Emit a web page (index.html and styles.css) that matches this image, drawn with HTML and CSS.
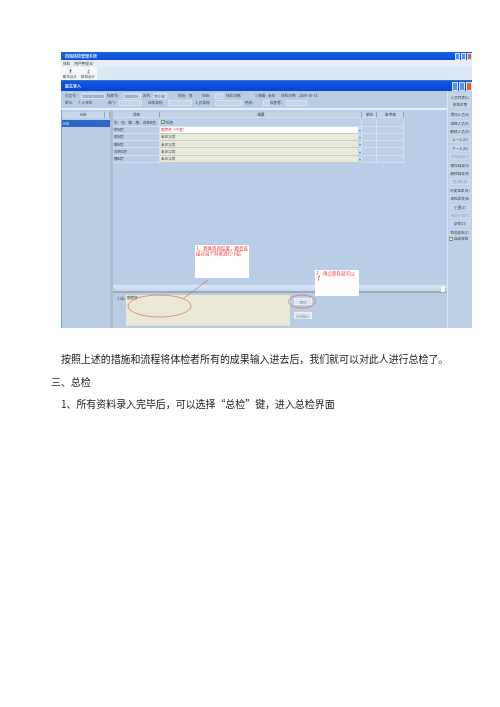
FILE: index.html
```html
<!DOCTYPE html>
<html lang="zh">
<head>
<meta charset="utf-8">
<title>总检</title>
<link rel="stylesheet" href="styles.css">
</head>
<body>
<main class="page">
  <figure class="shot">
    <div class="app">
      <div class="title">
        <span class="title-text">四海体检管理系统</span>
        <span class="controls"><i class="btn-min"></i><i class="btn-max"></i><i class="btn-close"></i></span>
      </div>
      <div class="menu"><span>体检</span><span>用户管理(U)</span></div>
      <div class="tools">
        <div class="tool">
          <svg viewBox="0 0 10 6" class="tool-icon"><path d="M5 0.5v3M3.500 2 5 .5 6.500 2M4 5h2" stroke="#333" fill="none"/></svg>
          <span>医生设计</span>
        </div>
        <div class="tool">
          <svg viewBox="0 0 10 6" class="tool-icon"><path d="M6 0.5 4.500 3.500M3.500 5h3" stroke="#333" fill="none"/></svg>
          <span>群检设计</span>
        </div>
      </div>
      <div class="subtitle">
        <span class="title-text">医生录入</span>
        <span class="controls big"><i class="btn-min"></i><i class="btn-max"></i><i class="btn-close"></i></span>
      </div>
      <div class="body">
        <div class="main">
          <div class="info">
            <div class="info-row">
              <span class="w16">会员号:</span><span class="field w24">10010180004</span>
              <span class="w16 m2">档案号:</span><span class="field w18">1000025</span>
              <span class="w10 m2">姓名:</span><span class="field w14">李小宝</span>
              <span class="w11 m11">性别:</span><span class="w13">男</span>
              <span class="w13">年龄:</span><span class="field w8"></span>
              <span class="w22 m3">体检次数:</span><span class="w10 end">1</span>
              <span class="w10">婚姻:</span><span class="w13">未知</span>
              <span class="w18">体检日期:</span><span class="w20">2009-10-14</span>
            </div>
            <div class="info-row">
              <span class="w13">单位:</span><span class="w30">个人体检</span>
              <span class="w11">部门:</span><span class="field w23"></span>
              <span class="w20 m6">体检类别:</span><span class="field w24"></span>
              <span class="w20 m3">人员类别:</span><span class="field w27"></span>
              <span class="w18 m3">民族:</span><span class="field w7"></span>
              <span class="w16">检查者:</span><span class="field w21"></span>
            </div>
          </div>
          <div class="work">
            <div class="groups">
              <div class="groups-head"><span>年龄</span><span></span></div>
              <div class="groups-row"><span>A组</span><span></span></div>
            </div>
            <div class="results">
              <div class="table">
                <div class="cell head">项目</div><div class="cell head">结果</div><div class="cell head">单位</div><div class="cell head">参考值</div>
                <div class="cell name">肝、胆、脾、胰、双肾B超</div><div class="cell check"><b class="box">✓</b> 检查</div><div class="cell"></div><div class="cell"></div>
                <div class="cell name">肝B超</div><div class="cell value white"><span class="red">脂肪肝（中度）</span><em>▾</em></div><div class="cell"></div><div class="cell"></div>
                <div class="cell name">胆B超</div><div class="cell value">未见异常<em>▾</em></div><div class="cell"></div><div class="cell"></div>
                <div class="cell name">脾B超</div><div class="cell value">未见异常<em>▾</em></div><div class="cell"></div><div class="cell"></div>
                <div class="cell name">双肾B超</div><div class="cell value">未见异常<em>▾</em></div><div class="cell"></div><div class="cell"></div>
                <div class="cell name">胰B超</div><div class="cell value">未见异常<em>▾</em></div><div class="cell"></div><div class="cell"></div>
              </div>
              <div class="scrollbar"><span>‹</span><i></i><span>›</span></div>
              <div class="summary">
                <span class="summary-label">小结:</span>
                <div class="summary-text">脂肪肝</div>
                <div class="summary-actions">
                  <span class="action">保存</span>
                  <span class="action">分析输入</span>
                </div>
              </div>
            </div>
          </div>
        </div>
        <aside class="side">
          <span class="side-btn">人员列表(L)</span>
          <span class="side-btn tight">体检日期</span>
          <span class="side-btn">增加人员(A)</span>
          <span class="side-btn">编辑人员(E)</span>
          <span class="side-btn">删除人员(D)</span>
          <span class="side-btn">上一人(U)</span>
          <span class="side-btn">下一人(N)</span>
          <span class="side-btn off">添加结果(I)</span>
          <span class="side-btn">保存结果(S)</span>
          <span class="side-btn">删除结果(R)</span>
          <span class="side-btn off">查询结果</span>
          <span class="side-btn">历史结果(H)</span>
          <span class="side-btn">体检报表(B)</span>
          <span class="side-btn">重置(Z)</span>
          <span class="side-btn off">预览小结(Y)</span>
          <span class="side-btn">总检(O)</span>
          <span class="side-btn">取消总检(C)</span>
          <label class="side-check"><b class="box"></b>自动体检</label>
        </aside>
      </div>
    </div>
    <div class="note note-one">1、具体咨询结果，都会直接对这个科室进行小结</div>
    <div class="note note-two">2、再点保存就可以了</div>
    <svg class="marks" viewBox="0 0 411 276">
      <ellipse cx="98.500" cy="254" rx="31.500" ry="11"/>
      <ellipse cx="241" cy="249.500" rx="13.500" ry="6.500"/>
      <path d="M123 246 147 228"/>
    </svg>
  </figure>
  <p class="line indent first">按照上述的措施和流程将体检者所有的成果输入进去后，我们就可以对此人进行总检了。</p>
  <p class="line">三、总检</p>
  <p class="line indent">1、所有资料录入完毕后，可以选择“总检”键，进入总检界面</p>
</main>
</body>
</html>
```
FILE: styles.css
```css
* { box-sizing: border-box; }
html, body { margin: 0; background: #fff; }
body { font-family: "Noto Sans CJK SC", sans-serif; color: #222; }
.page { width: 500px; height: 707px; padding: 52px 28px 0 61px; overflow: hidden; }

.shot {
  position: relative;
  width: 411px;
  height: 276px;
  margin: 0;
  filter: blur(.4px);
  font: 3.600px/1 "Noto Sans CJK SC", sans-serif;
}
.app { width: 100%; height: 100%; display: flex; flex-direction: column; background: #b9cde6; }
.title, .subtitle {
  display: flex;
  align-items: center;
  justify-content: space-between;
  color: #dfe9fb;
  background: linear-gradient(#1a63e6, #0a4fd6);
  padding-left: 4px;
}
.title { height: 8px; }
.subtitle { height: 11px; background: linear-gradient(#0f58e0, #0645d8); border-top: 1px solid #3a6fc0; }
.title-text { font-weight: 700; font-size: 4px; }
.controls { display: flex; gap: 1px; }
.controls i { display: block; width: 5px; height: 7px; background: #5f8fe8; border: .5px solid #cfe0fb; }
.controls .btn-close { background: #e0623c; }
.controls.big i { width: 6px; height: 9px; }

.menu { height: 7px; display: flex; align-items: center; gap: 4px; padding-left: 2px; background: #e6edf7; color: #333; }
.tools { height: 13px; display: flex; background: #dce7f5; }
.tool { width: 18px; display: flex; flex-direction: column; align-items: center; justify-content: center; background: #f3f6fb; color: #444; }
.tool-icon { width: 7px; height: 5px; margin-bottom: 1px; }

.body { flex: 1; display: flex; min-height: 0; }
.main { flex: 1; min-width: 0; display: flex; flex-direction: column; }
.info { height: 19px; padding: 2px 0 0 4px; border-bottom: 2px solid #e8eff8; background: #b8cce4; display: flex; flex-direction: column; gap: 1px; }
.info-row { display: flex; align-items: center; height: 6px; color: #3b4656; white-space: nowrap; }
.info-row span { flex: none; }
.field { height: 6px; line-height: 6px; background: #c3d5ea; border: .5px solid #d5e2f2; color: #667; overflow: hidden; }
.end { text-align: right; padding-right: 1px; }
.w7 { width: 7px; } .w8 { width: 8px; } .w10 { width: 10px; } .w11 { width: 11px; } .w13 { width: 13px; }
.w14 { width: 14px; } .w16 { width: 16px; } .w18 { width: 18px; } .w20 { width: 20px; } .w21 { width: 21px; }
.w22 { width: 22px; } .w23 { width: 23px; } .w24 { width: 24px; } .w27 { width: 27px; } .w30 { width: 30px; }
.m2 { margin-left: 2px; } .m3 { margin-left: 3px; } .m6 { margin-left: 6px; } .m11 { margin-left: 11px; }

.work { flex: 1; min-height: 0; display: flex; border-left: 1px solid #7f9fd8; }
.groups { width: 48px; padding-top: 2px; background: #b8cce4; }
.groups-head, .groups-row { display: grid; grid-template-columns: 43px 5px; }
.groups-head { height: 6px; text-align: center; line-height: 6px; background: #c9d8ea; color: #445; }
.groups-head span { border-right: .5px solid #8ea4bf; }
.groups-row { height: 7px; margin-top: 2px; line-height: 7px; background: #2d66c6; color: #e8eefa; padding-left: 1px; }
.results {
  flex: 1;
  min-width: 0;
  display: flex;
  flex-direction: column;
  margin-left: 3px;
  box-shadow: -3px 0 0 #b0bcc8;
  padding-top: 2px;
}
.table { flex: 1; display: grid; grid-template-columns: 47px 202px 15px 27px; grid-auto-rows: 7.300px; align-content: start; }
.table > .head { height: 6px; background: #c3d3e7; color: #445; justify-content: center; font-weight: 500; border-right: .5px solid #8ea4bf; }
.cell {
  display: flex;
  align-items: center;
  padding-left: 1px;
  color: #3a4454;
  background: #bdd0e7;
  border-right: .5px solid #d3e0f0;
  border-bottom: .5px solid #d3e0f0;
  white-space: nowrap;
}
.name { background: #bccee6; }
.check { background: #bdd0e7; gap: 1px; }
.value { background: #ecead6; justify-content: space-between; border-bottom: 1px solid #b9cde6; }
.value em { font-style: normal; font-size: 4px; color: #39c; background: #c6d8ec; padding: 1px 0 1px 1px; }
.white { background: #fff; }
.red { color: #e33030; }
.box { display: inline-block; width: 4px; height: 4px; font-size: 3.500px; line-height: 4px; text-align: center; font-weight: 400; color: #184; background: #e7f2df; border: .5px solid #6a9a6a; }

.scrollbar { height: 8px; display: flex; align-items: center; justify-content: space-between; padding: 0 1px; background: linear-gradient(#dbe7f6, #c6d8ee 70%, #9faab6 70%); color: #445; }
.scrollbar i { display: block; width: 4px; height: 5px; margin-left: auto; background: #fff; }
.summary { height: 35px; display: flex; padding-top: 2px; background: #b8cce4; }
.summary-label { width: 13px; padding: 2px 0 0 4px; color: #445; white-space: nowrap; }
.summary-text { width: 164px; height: 31px; padding: 1px; background: #ebe8d6; color: #333; border-bottom: 1px solid #d8e2ec; }
.summary-actions { display: flex; flex-direction: column; gap: 7px; padding: 3px 0 0 4px; }
.action { width: 18px; height: 7px; line-height: 7px; text-align: center; background: #dde7f3; color: #7a8796; border: .5px solid #eef3f9; white-space: nowrap; }

.side { width: 25px; padding-top: 3px; display: flex; flex-direction: column; align-items: center; gap: 1.400px; background: #bdd0e7; border-left: 1px solid #dce7f4; }
.side-btn { width: 22px; height: 7px; line-height: 7px; text-align: center; color: #2c3644; background: #c6d7eb; white-space: nowrap; }
.side-btn.tight { margin-top: -1px; margin-bottom: 1.500px; }
.side-btn.off { color: #93a2b6; }
.side-check { display: flex; align-items: center; gap: 1px; width: 22px; color: #2c3644; white-space: nowrap; }

.note { position: absolute; background: #fff; color: #e8302c; line-height: 1.200; padding: 1px; font-size: 4.500px; }
.note-one { left: 134px; top: 193px; width: 54px; height: 33px; }
.note-two { left: 254px; top: 218px; width: 44px; height: 26px; }
.marks { position: absolute; inset: 0; width: 100%; height: 100%; }
.marks ellipse, .marks path { fill: none; stroke: #d9665c; stroke-width: .7; }

.line {
  margin: 0 0 0 -61px;
  height: 22.500px;
  padding-left: 51px;
  font-size: 10px;
  line-height: 22.500px;
  letter-spacing: -.07px;
  color: #1c1c1c;
  white-space: nowrap;
  filter: blur(.25px);
}
.indent { padding-left: 61px; }
.first { margin-top: 20px; }
```
